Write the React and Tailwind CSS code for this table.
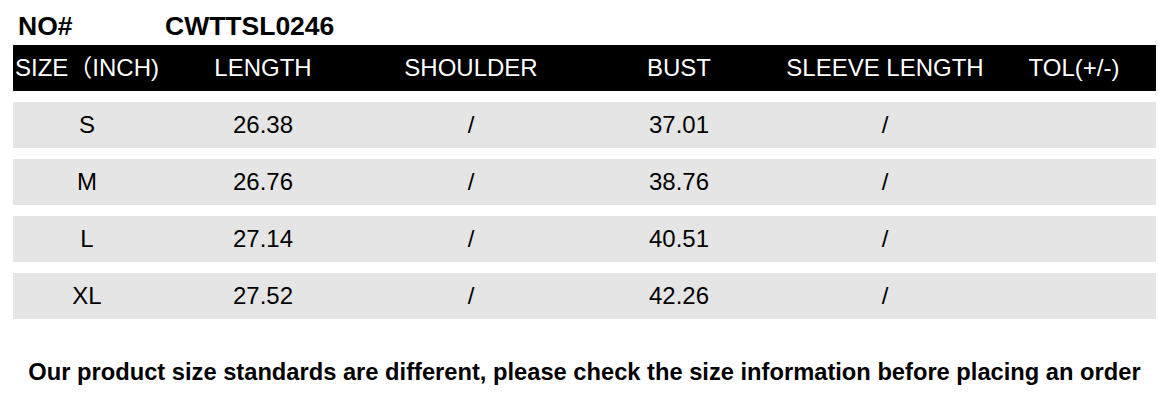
const cols = 'grid grid-cols-[148px_204px_212px_204px_208px_170px] items-center text-center'

const rows = [
  ['S', '26.38', '/', '37.01', '/', ''],
  ['M', '26.76', '/', '38.76', '/', ''],
  ['L', '27.14', '/', '40.51', '/', ''],
  ['XL', '27.52', '/', '42.26', '/', ''],
]

export default function App() {
  return (
    <div className="w-[1169px] h-[409px] bg-white text-black font-['Liberation_Sans','Noto_Sans_CJK_SC',sans-serif]">
      <div className="flex h-[45px] items-center pt-[8px] text-[26.5px] font-bold leading-none">
        <span className="ml-[18px] w-[147px]">NO#</span>
        <span>CWTTSL0246</span>
      </div>

      <div className={`${cols} mx-[13px] h-[46px] bg-black text-white text-[24px] leading-none`}>
        <div className="text-left pl-[2px]">SIZE（INCH)</div>
        <div>LENGTH</div>
        <div>SHOULDER</div>
        <div>BUST</div>
        <div>SLEEVE LENGTH</div>
        <div>TOL(+/-)</div>
      </div>

      <div className="flex flex-col gap-[11px] mt-[11px] mx-[13px]">
        {rows.map((r, i) => (
          <div key={i} className={`${cols} h-[46px] bg-[#e5e5e5] text-[24px] leading-none`}>
            {r.map((c, j) => (
              <div key={j}>{c}</div>
            ))}
          </div>
        ))}
      </div>

      <p className="mt-[42px] text-center text-[23.7px] font-bold leading-none">
        Our product size standards are different, please check the size information before placing an order
      </p>
    </div>
  )
}
